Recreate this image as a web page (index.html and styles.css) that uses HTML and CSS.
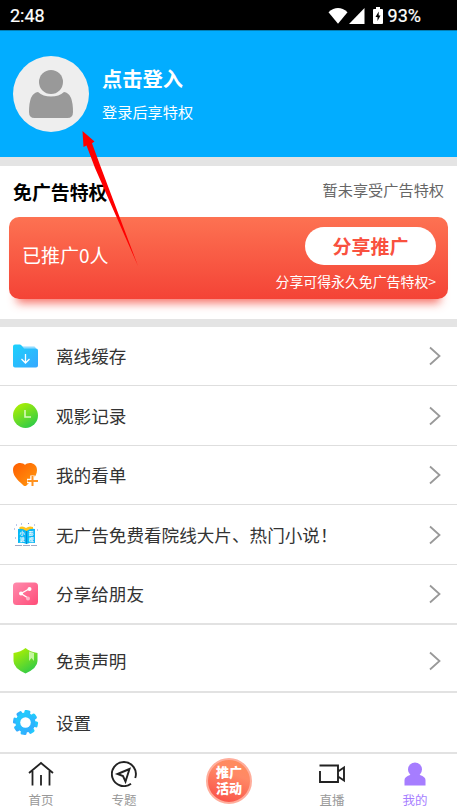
FILE: index.html
```html
<!DOCTYPE html>
<html lang="zh-CN">
<head>
<meta charset="utf-8">
<meta name="viewport" content="width=device-width, initial-scale=1">
<title>我的</title>
<link rel="stylesheet" href="styles.css">
</head>
<body>
<div class="app">
  <div class="status">
    <span class="clock">2:48</span>
    <div class="status-right">
      <svg width="20" height="16" viewBox="0 0 20 16"><path d="M.5 4.2Q10-4 19.500 4.200L10 15.800z" fill="#fff"/></svg>
      <svg class="signal" width="16" height="16" viewBox="0 0 16 16"><path d="M15.500 0V16H0z" fill="#fff"/></svg>
      <svg class="battery" width="10" height="17" viewBox="0 0 10 17"><path d="M3 0H7V2H9Q10 2 10 3V16Q10 17 9 17H1Q0 17 0 16V3Q0 2 1 2H3z" fill="#fff"/><path d="M5.700 4.500L2.500 10H4.500V14L7.500 8.500H5.700z" fill="#000"/></svg>
      <span>93%</span>
    </div>
  </div>

  <header class="profile">
    <svg width="76" height="76" viewBox="0 0 76 76"><circle cx="38" cy="38" r="38" fill="#eee"/><circle cx="38" cy="26" r="12" fill="#999"/><path d="M25 36Q30 40.500 38 40.500T51 36Q60 37 60 56Q60 62 54.500 62H21.500Q16 62 16 56Q16 37 25 36z" fill="#999"/></svg>
    <div class="profile-text">
      <div class="login">点击登入</div>
      <div class="sub">登录后享特权</div>
    </div>
  </header>

  <section class="privilege">
    <div class="privilege-head"><h2>免广告特权</h2><span>暂未享受广告特权</span></div>
    <div class="promo">
      <span class="count">已推广0人</span>
      <div class="promo-right">
        <div class="share-btn">分享推广</div>
        <div class="hint">分享可得永久免广告特权&gt;</div>
      </div>
    </div>
  </section>

  <main class="menu">
    <div class="row">
      <svg class="icon" viewBox="0 0 26 26"><defs><linearGradient id="blue" x2="1" y2="1"><stop stop-color="#1cd2fc"/><stop offset="1" stop-color="#36a7ff"/></linearGradient></defs><path d="M9 3.500H21Q23 3.500 23 7H9z" fill="#90dbff"/><path d="M0 3.500Q0 1.500 2 1.500H7Q8 1.500 9 3L11 5.500H23Q25 5.500 25 7.500V22.500Q25 24.500 23 24.500H2Q0 24.500 0 22.500z" fill="url(#blue)"/><path d="M12.500 11V20M8.500 16L12.500 20L16.500 16" stroke="#fff" stroke-width="1.300" fill="none"/></svg>
      <span>离线缓存</span><svg class="chevron" viewBox="0 0 12 20"><path d="M1 1.500L10.500 10L1 18.500"/></svg>
    </div>
    <div class="row">
      <svg class="icon" viewBox="0 0 26 26"><defs><linearGradient id="green" x1=".2" x2=".8" y2="1"><stop stop-color="#aff000"/><stop offset="1" stop-color="#28c94c"/></linearGradient></defs><circle cx="12.500" cy="12.500" r="12.500" fill="url(#green)"/><path d="M12 7V14H18" stroke="#d9f9ba" stroke-width="1.600" fill="none"/></svg>
      <span>观影记录</span><svg class="chevron" viewBox="0 0 12 20"><path d="M1 1.500L10.500 10L1 18.500"/></svg>
    </div>
    <div class="row short">
      <svg class="icon" viewBox="0 0 26 26"><defs><linearGradient id="orange" x2="1" y2="1"><stop stop-color="#ff5d00"/><stop offset="1" stop-color="#ff9b10"/></linearGradient></defs><path d="M12 3C9-.5 0 .5 0 8C0 15 7 20 10.500 23.500Q12 24.500 13.500 23.500C18 19 24 15 24 8C24 .5 15-.5 12 3z" fill="url(#orange)"/><path d="M19.500 13.500V24.500M14 19H25" stroke="#fff" stroke-width="4.500"/><path d="M19.500 14V24M14.500 19H25" stroke="#ff9220" stroke-width="2"/></svg>
      <span>我的看单</span><svg class="chevron" viewBox="0 0 12 20"><path d="M1 1.500L10.500 10L1 18.500"/></svg>
    </div>
    <div class="row">
      <svg class="icon" viewBox="0 0 26 26"><path d="M6.500 5Q10 3.500 13 6Q16 3.500 20 5V11H6.500z" fill="#ffc51d"/><path d="M5 7Q9 6 13.500 9Q18 6 22 7V21Q18 20 13.500 22Q9 20 5 21z" fill="#08b8f5"/><path d="M13.500 9V22" stroke="#078bd8"/><path d="M2 23.500H24" stroke="#8893b8" stroke-width=".8" stroke-dasharray="7 1"/><path d="M3 3h1M8 2h1M15 1.500h1M21 3h1M1 7h1M24 8h1M2 16h1" stroke="#7e90d1"/><text x="6.500" y="13" class="tiny">小</text><text x="6.500" y="19" class="tiny">说</text><text x="15.500" y="13" class="tiny">影</text><text x="15.500" y="19" class="tiny">视</text></svg>
      <span>无广告免费看院线大片、热门小说！</span><svg class="chevron" viewBox="0 0 12 20"><path d="M1 1.500L10.500 10L1 18.500"/></svg>
    </div>
    <div class="row thick">
      <svg class="icon" viewBox="0 0 26 26"><defs><linearGradient id="pink" x2="1" y2="1"><stop stop-color="#ff8cae"/><stop offset="1" stop-color="#ff4c78"/></linearGradient></defs><rect y="1.500" width="25" height="22.500" rx="3.500" fill="url(#pink)"/><path d="M16 8L8 12.500L15 17" stroke="#fff" stroke-width="1.400" fill="none"/><circle cx="16.500" cy="8" r="2" fill="#fff"/><circle cx="8" cy="12.500" r="2" fill="#fff"/><circle cx="15" cy="17.500" r="2" fill="#ffb5c9"/></svg>
      <span>分享给朋友</span><svg class="chevron" viewBox="0 0 12 20"><path d="M1 1.500L10.500 10L1 18.500"/></svg>
    </div>
    <div class="row thick tall">
      <svg class="icon" viewBox="0 0 26 26"><path d="M12.500 0Q17 4 24.500 5V13Q24.500 20 12.500 25.500Q.5 20 .5 13V5Q8 4 12.500 0z" fill="url(#green)"/><path d="M16 3.500L21 5V13L18.500 10L16 13z" fill="#c6f5a0"/></svg>
      <span>免责声明</span><svg class="chevron" viewBox="0 0 12 20"><path d="M1 1.500L10.500 10L1 18.500"/></svg>
    </div>
    <div class="row thick last">
      <svg class="icon" viewBox="0 0 26 26"><g fill="url(#blue)" transform="rotate(10 12.500 12.500)"><rect x="9.500" y="0" width="6" height="25" rx="1.500"/><rect x="9.500" y="0" width="6" height="25" rx="1.500" transform="rotate(45 12.500 12.500)"/><rect x="9.500" y="0" width="6" height="25" rx="1.500" transform="rotate(90 12.500 12.500)"/><rect x="9.500" y="0" width="6" height="25" rx="1.500" transform="rotate(135 12.500 12.500)"/><circle cx="12.500" cy="12.500" r="10"/></g><circle cx="12.500" cy="12.500" r="5.300" fill="#fff"/></svg>
      <span>设置</span>
    </div>
  </main>

  <nav class="tabs">
    <div class="tab"><svg width="26" height="26" viewBox="0 0 26 26"><path d="M1 12L13 2L25 12M4.500 10V24.500M21.500 10V24.500M13 14V24.500" fill="none" stroke="#222" stroke-width="1.800"/></svg><span>首页</span></div>
    <div class="tab"><svg width="26" height="26" viewBox="0 0 26 26"><path d="M24.200 17A12 12 0 1 0 20 22.700M18.500 8L6.500 13L12 15L14.500 20.500z" fill="none" stroke="#222" stroke-width="1.900"/></svg><span>专题</span></div>
    <div class="tab promo-tab"><div class="badge"><span>推广</span><span>活动</span></div></div>
    <div class="tab"><svg width="26" height="26" viewBox="0 0 26 26"><path d="M1 10V21H19V4.500H.5M19 10.500L25 6.500V19.500L19 15.500" fill="none" stroke="#222" stroke-width="1.900"/></svg><span>直播</span></div>
    <div class="tab active"><svg width="26" height="26" viewBox="0 0 26 26"><circle cx="13" cy="8.500" r="7" fill="#a67dff"/><path d="M2.500 24.500V19Q2.500 16 8 14H18Q23.500 16 23.500 19V24.500z" fill="#a67dff"/></svg><span>我的</span></div>
  </nav>

  <svg class="pointer" width="60" height="140" viewBox="0 0 60 140"><path d="M3.500 1L15.500 11.500L13 13.200L21 35L59 136L16 38L7.500 15.500L4.500 17z" fill="#f00"/></svg>
</div>
</body>
</html>
```
FILE: styles.css
```css
* { box-sizing: border-box; }
body { margin: 0; font-family: "Noto Sans CJK SC", sans-serif; color: #333; }
svg { display: block; flex: none; }
.app { position: relative; width: 457px; height: 812px; overflow: hidden; background: #fff; display: flex; flex-direction: column; }
.app > * { flex: none; }

.status { height: 30px; background: #000; color: #fff; display: flex; align-items: center; justify-content: space-between; padding: 1px 36px 0 10px; font: 400 18px/30px Roboto, sans-serif; -webkit-text-stroke: .2px #fff; }
.status-right { display: flex; align-items: center; }
.signal { margin-left: 1px; }
.battery { margin: 0 5px 0 8px; }

.profile { height: 127px; background: #02adff; color: #fff; border-top: 1px solid #047eb3; display: flex; padding: 25px 13px 0; gap: 13px; }
.profile-text { padding-top: 7px; }
.login { font-size: 20.300px; line-height: 30px; font-weight: 700; }
.sub { font-size: 15.200px; line-height: 24px; margin-top: 6px; }

.privilege { height: 170px; border-top: 9px solid #e4e4e4; border-bottom: 8px solid #e4e4e4; padding: 11px 9px 0; }
.privilege-head { display: flex; justify-content: space-between; height: 40px; padding: 0 4px; }
.privilege h2 { margin: 0; font-size: 18.900px; line-height: 30px; font-weight: 700; color: #000; }
.privilege-head span { font-size: 15.200px; line-height: 24px; color: #666; }
.promo { height: 82px; border-radius: 10px; background: linear-gradient(#fd7252, #f44336); box-shadow: 0 12px 10px -8px rgba(244, 67, 54, .75); color: #fff; display: flex; justify-content: space-between; padding: 10px 12px 0 13px; }
.count { font-size: 19px; line-height: 30px; margin-top: 13px; }
.promo-right { display: flex; flex-direction: column; align-items: flex-end; }
.share-btn { width: 131px; height: 38px; border-radius: 19px; background: #fff; color: #f9513f; font-size: 19px; line-height: 38px; font-weight: 700; text-align: center; }
.hint { font-size: 13.900px; line-height: 20px; margin-top: 6px; white-space: nowrap; }

.menu { margin-top: -1px; }
.row { height: 60px; border-bottom: 1px solid #dedede; display: flex; align-items: center; padding: 0 16px 0 13px; font-size: 17.600px; line-height: 26px; }
.row span { flex: 1; white-space: nowrap; }
.icon { width: 26px; height: 26px; margin-right: 17px; }
.chevron { width: 12px; height: 20px; }
.chevron path { fill: none; stroke: #999; stroke-width: 1.800; }
.short { height: 59px; }
.thick { border-bottom: 2px solid #e2e2e2; }
.tall { height: 68px; padding-top: 6px; }
.last { height: 61px; }
.tiny { font-size: 5px; font-weight: 700; fill: #fff; }

.tabs { flex: 1; display: grid; grid-template-columns: 82px 84px 126px 80px 86px; justify-items: center; }
.tab { width: 38px; display: flex; flex-direction: column; align-items: center; padding-top: 7px; color: #999; font-size: 12.500px; line-height: 18px; }
.tab > span { margin-top: 4px; }
.active { color: #a67dff; }
.promo-tab { width: 46px; padding-top: 4px; }
.badge { width: 46px; height: 46px; border: 2px solid #ffad9b; border-radius: 50%; background: linear-gradient(20deg, #f94943, #ff8966 65%, #ff8c58); color: #fff; font-size: 13px; font-weight: 900; line-height: 16px; display: flex; flex-direction: column; align-items: center; padding-top: 4px; }
.pointer { position: absolute; left: 79px; top: 130px; }
```
